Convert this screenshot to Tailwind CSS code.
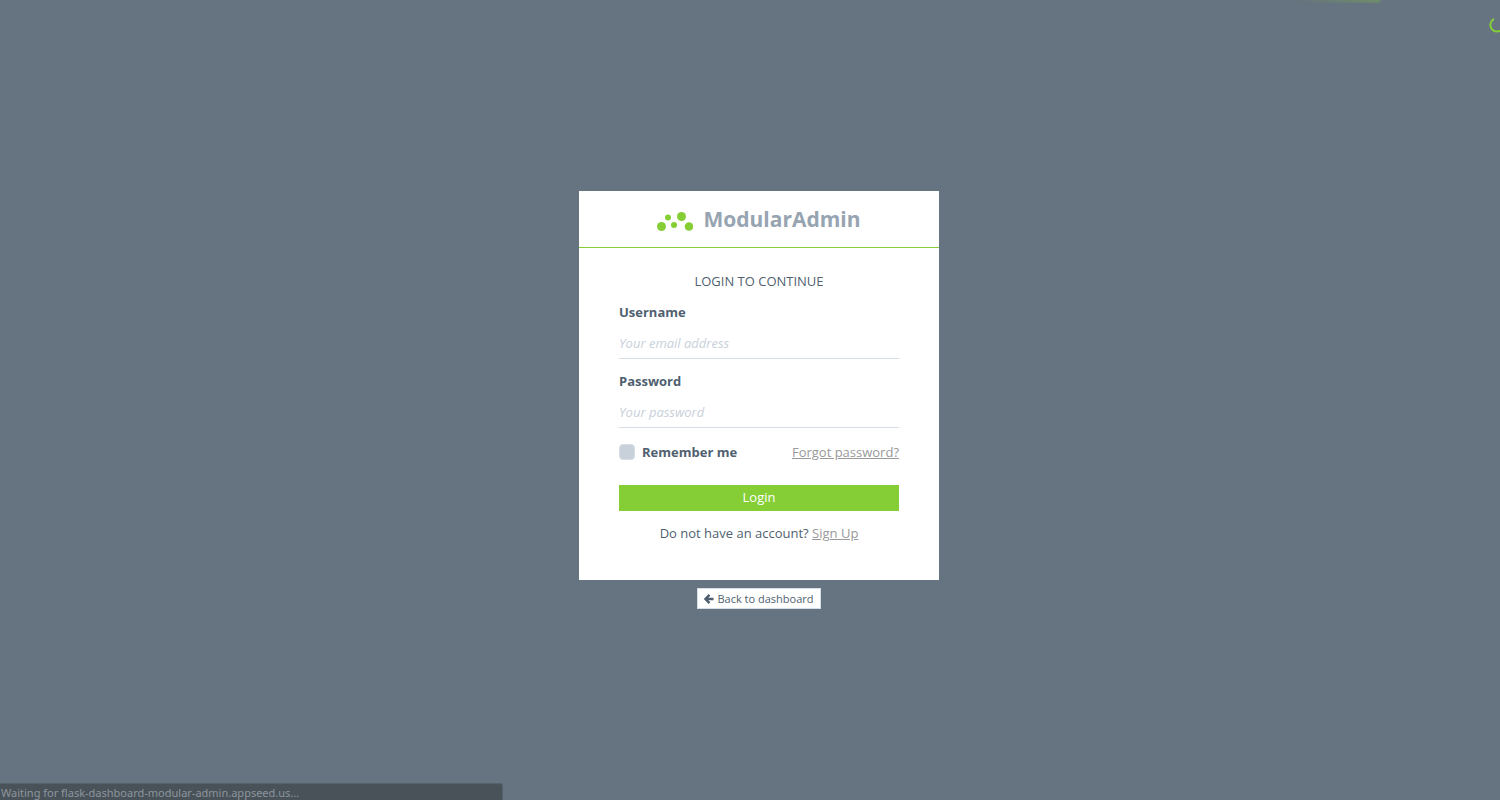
<!DOCTYPE html>
<html lang="en">
<head>
<meta charset="utf-8">
<title>ModularAdmin - Login</title>
<script src="https://cdn.jsdelivr.net/npm/@tailwindcss/browser@4"></script>
</head>
<body class="relative min-h-screen overflow-hidden bg-[#667380] font-['Open_Sans',sans-serif] text-[13px] leading-5 text-[#4f5f6f]">
  <div class="absolute top-0 right-[120px] h-[2px] w-[85px] bg-linear-to-r from-transparent to-[#85ce36]/50 blur-[1px]"></div>
  <svg class="absolute top-[17px] right-[-5px] size-4" viewBox="0 0 16 16" fill="none" stroke="#85ce36" stroke-width="2" aria-hidden="true"><path d="M5 2A6.600 6.600 0 1 0 13.500 11.500"/></svg>

  <main class="flex flex-col items-center pt-[191px] pl-[18px]">
    <section class="w-[360px] bg-white">
      <header class="flex h-[57px] items-center justify-center gap-[10px] border-b border-[#85ce36]">
        <svg class="mt-[5px] h-5 w-9" viewBox="0 0 36 20" fill="#85ce36" aria-hidden="true"><circle cx="4.500" cy="14.500" r="4.500"/><circle cx="11" cy="5.500" r="3"/><circle cx="17" cy="13" r="3"/><circle cx="24.500" cy="4.500" r="4.500"/><circle cx="32" cy="14.500" r="4.300"/></svg>
        <h1 class="text-[21px] leading-7 font-bold text-[#97a4b1]">ModularAdmin</h1>
      </header>
      <div class="px-10 pt-[23px] pb-[37px]">
        <p class="text-center">LOGIN TO CONTINUE</p>
        <form>
          <label for="username" class="mt-[11px] block font-bold">Username</label>
          <input id="username" type="email" placeholder="Your email address" class="mt-[6px] block h-[31px] w-full border-b border-[#d7dde4] pb-px outline-none placeholder:text-[#c8d0da] placeholder:italic">
          <label for="password" class="mt-3 block font-bold">Password</label>
          <input id="password" type="password" placeholder="Your password" class="mt-[6px] block h-[31px] w-full border-b border-[#d7dde4] pb-px outline-none placeholder:text-[#c8d0da] placeholder:italic">
          <div class="mt-[14px] flex items-center justify-between">
            <label for="remember" class="flex items-center gap-[7px] font-bold"><input id="remember" type="checkbox" class="size-4 appearance-none rounded-[4px] border border-[#d7dde4] bg-[#c8d0da] checked:bg-[#85ce36]">Remember me</label>
            <a href="#" class="text-[#999] underline">Forgot password?</a>
          </div>
          <button type="submit" class="mt-[23px] block h-[26px] w-full bg-[#85ce36] pb-[2px] text-white">Login</button>
          <p class="mt-3 text-center">Do not have an account? <a href="#" class="text-[#999] underline">Sign Up</a></p>
        </form>
      </div>
    </section>
    <a href="#" class="mt-2 flex h-[21px] items-center gap-[3px] border border-[#d7dde4] bg-white px-[6px] text-[11px]">
      <svg class="size-[10px]" viewBox="0 0 10 10" fill="none" stroke="#4f5f6f" stroke-width="2.400" aria-hidden="true"><path d="M5.500.8 1.500 5l4 4.200M1.700 5H9.500"/></svg>Back to dashboard</a>
  </main>

  <div class="absolute bottom-0 left-0 flex h-[17px] w-[503px] items-end rounded-tr-[3px] border-t border-r border-[#56616a] bg-[#4a5259] pl-px font-['Noto_Sans',sans-serif] text-[11px] leading-[14px] whitespace-nowrap text-[#8a959e]">Waiting for flask-dashboard-modular-admin.appseed.us...</div>
</body>
</html>
